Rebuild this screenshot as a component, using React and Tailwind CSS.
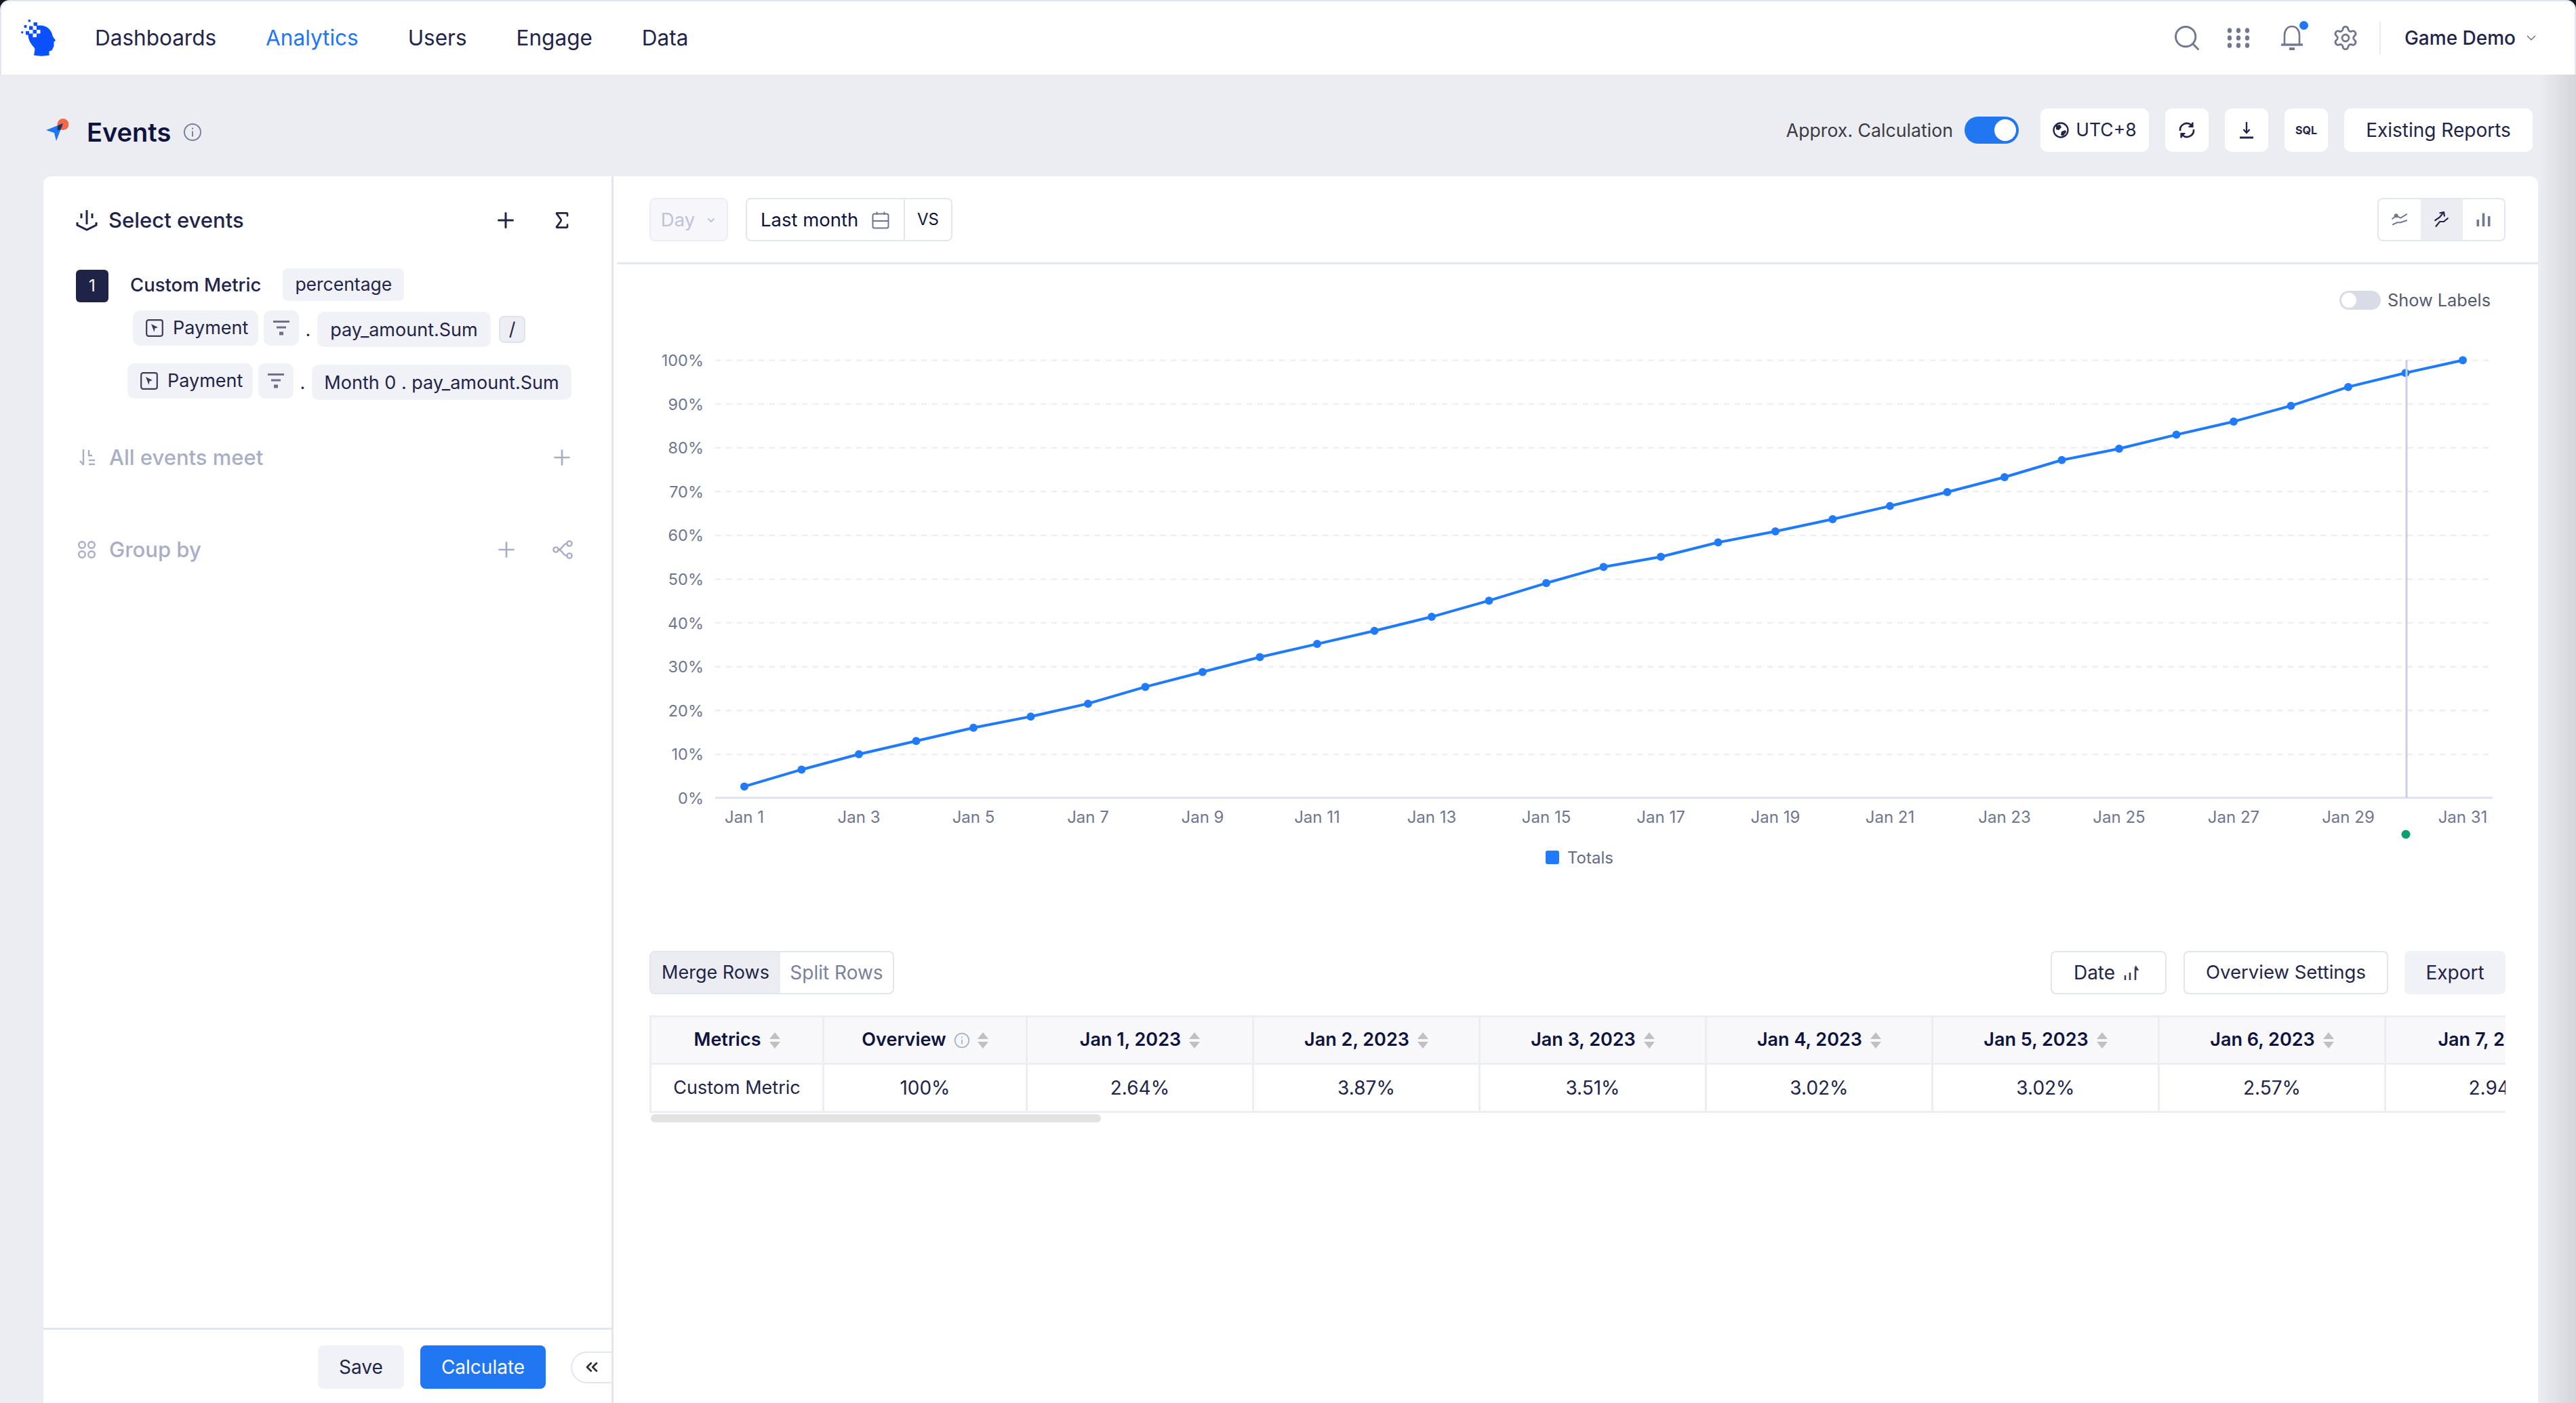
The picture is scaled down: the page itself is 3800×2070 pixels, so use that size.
import { ChevronDown, ChevronsLeft, Plus, Search, Settings, Sigma } from 'lucide-react';

const navLinks = ['Dashboards', 'Analytics', 'Users', 'Engage', 'Data'];

// cumulative share per day, Jan 1 - Jan 31
const series = [
  2.64, 6.51, 10.02, 13.04, 16.06, 18.63, 21.57, 25.4, 28.8, 32.2, 35.2, 38.2, 41.4, 45.1, 49.1, 52.8,
  55.1, 58.4, 60.9, 63.7, 66.7, 69.9, 73.3, 77.2, 79.8, 83, 86, 89.6, 93.9, 97.1, 100,
];

const dayColumns = [
  ['Jan 1, 2023', '2.64%'],
  ['Jan 2, 2023', '3.87%'],
  ['Jan 3, 2023', '3.51%'],
  ['Jan 4, 2023', '3.02%'],
  ['Jan 5, 2023', '3.02%'],
  ['Jan 6, 2023', '2.57%'],
  ['Jan 7, 2023', '2.94%'],
];

const xAt = (i) => 1098 + i * 84.5;
const yAt = (v) => 1177.5 - v * 6.46;

function Logo() {
  return (
    <svg width="60" height="62" viewBox="30 25 60 62" className="shrink-0">
      <path
        d="M50 81.5C50.5 77 52 74 51 71C47 66 42 61 41.5 52C41 44 47 38 58 37.5C69 37 76 44 77.5 52.5C78 55 81.5 58 81.8 59.5C81.5 61 79.5 61 79.3 62.5C79.5 64 80 65 79.3 66.5C79.7 68 79.5 69.5 78 70.5C77.5 73 77 75 73 75.3C72 77 72.5 79.5 73 81.5C65 83 57 83 50 81.5Z"
        fill="#0a50ff"
      />
      <rect x="49.5" y="33" width="5.5" height="5" fill="#0a50ff" />
      <rect x="43" y="38.5" width="5.5" height="5.5" fill="#0a50ff" />
      <rect x="38" y="46" width="5.5" height="5.5" fill="#0a50ff" />
      <rect x="48.5" y="38.5" width="5.5" height="5.5" fill="#fff" />
      <rect x="43" y="44" width="5.5" height="5.5" fill="#fff" />
      <rect x="54" y="44" width="5.5" height="5.5" fill="#fff" />
      <rect x="48.5" y="49.5" width="5.5" height="5.5" fill="#fff" />
      <circle cx="37.5" cy="39" r="2.2" fill="#0a50ff" />
      <circle cx="43.3" cy="30.7" r="1.9" fill="#0a50ff" />
      <circle cx="32.7" cy="47.7" r="1.7" fill="#0a50ff" />
    </svg>
  );
}

function AppsIcon() {
  return (
    <svg width="34" height="32" viewBox="0 0 34 32" fill="#71778f">
      {[5, 16, 27].map((y) =>
        [4, 17, 30].map((x) => <ellipse key={`${x}-${y}`} cx={x} cy={y} rx="3.2" ry="3.8" />)
      )}
    </svg>
  );
}

function BellIcon() {
  return (
    <svg width="34" height="38" viewBox="0 0 34 38" fill="none" stroke="#71778f" strokeWidth="2.6">
      <path d="M6 28V15C6 7.5 10.5 2 17 2C23.5 2 28 7.5 28 15V28" />
      <path d="M1 29H33" strokeWidth="3.4" />
      <path d="M13 35H21" strokeWidth="4" />
    </svg>
  );
}

function RocketIcon() {
  return (
    <svg width="34" height="36" viewBox="67 175 34 36" className="shrink-0">
      <circle cx="93" cy="184.5" r="8.5" fill="#f4694b" />
      <path d="M68 193L93 183L83 209L80 197Z" fill="#1f76f3" />
      <path d="M85 186.2L93 183L89.5 192.5L84.5 193Z" fill="#2b2f4d" />
    </svg>
  );
}

function InfoIcon({ size = 28, color = '#7b819b' }) {
  return (
    <svg width={size} height={size} viewBox="0 0 28 28" fill="none" stroke={color} strokeWidth="2" className="shrink-0">
      <circle cx="14" cy="14" r="12" />
      <path d="M14 12.5V20.5" />
      <path d="M14 7.5V9.8" />
    </svg>
  );
}

function GlobeIcon() {
  return (
    <svg width="24" height="24" viewBox="0 0 24 24" fill="none">
      <circle cx="12" cy="12" r="10.5" stroke="#22244a" strokeWidth="2.4" />
      <path d="M5 5L11 4L13 8L9 12L5 11Z" fill="#22244a" />
      <path d="M13 14L19 12L20 15L15 21L12 19Z" fill="#22244a" />
    </svg>
  );
}

function RefreshIcon() {
  return (
    <svg width="28" height="28" viewBox="0 0 28 28" fill="none" stroke="#22244a" strokeWidth="2.6">
      <path d="M4 15A10 10 0 0 1 20.5 6.5" />
      <path d="M24 13A10 10 0 0 1 7.5 21.5" />
      <path d="M22.5 2.5V9H16.5" strokeWidth="2.2" fill="#22244a" />
      <path d="M5.5 25.5V19H11.5" strokeWidth="2.2" fill="#22244a" />
    </svg>
  );
}

function DownloadIcon() {
  return (
    <svg width="24" height="26" viewBox="0 0 24 26" fill="none" stroke="#22244a" strokeWidth="2.4">
      <path d="M12 1V16" />
      <path d="M7.5 12L12 17L16.5 12" />
      <path d="M2 24H22" strokeWidth="3" />
    </svg>
  );
}

function SelectEventsIcon() {
  return (
    <svg width="32" height="32" viewBox="0 0 32 32" fill="none" stroke="#22244a" strokeWidth="3" className="shrink-0">
      <path d="M16 1V22" />
      <path d="M8 6V13" />
      <path d="M24 6V13" />
      <path d="M2 19V23L16 30L30 23V19" />
    </svg>
  );
}

function WhereIcon() {
  return (
    <svg width="26" height="26" viewBox="0 0 26 26" fill="none" stroke="#a8aec6" strokeWidth="2.4" className="shrink-0">
      <path d="M7 1V24" />
      <path d="M2 18L7 24" />
      <path d="M15 2V10L20 10" />
      <path d="M15 17H24" />
      <path d="M15 23H24" />
    </svg>
  );
}

function GroupIcon() {
  return (
    <svg width="28" height="28" viewBox="0 0 28 28" fill="none" stroke="#a8aec6" strokeWidth="2.4" className="shrink-0">
      <circle cx="7" cy="7" r="4.8" />
      <circle cx="21" cy="7" r="4.8" />
      <circle cx="7" cy="21" r="4.8" />
      <circle cx="21" cy="21" r="4.8" />
    </svg>
  );
}

function ShareIcon() {
  return (
    <svg width="30" height="28" viewBox="0 0 30 28" fill="none" stroke="#a8aec6" strokeWidth="2.4">
      <circle cx="5" cy="14" r="3.6" />
      <circle cx="25" cy="5" r="3.6" />
      <circle cx="25" cy="23" r="3.6" />
      <path d="M8.5 14C15 14 15 5 21.5 5" />
      <path d="M8.5 14C15 14 15 23 21.5 23" />
    </svg>
  );
}

function EventIcon() {
  return (
    <svg width="26" height="26" viewBox="0 0 26 26" fill="none" className="shrink-0">
      <rect x="1.2" y="1.2" width="23.6" height="23.6" rx="3" stroke="#3a3d5c" strokeWidth="2.2" />
      <path d="M8 7L18 12L13.5 13.5L12.5 19Z" fill="#3a3d5c" />
    </svg>
  );
}

function FilterIcon() {
  return (
    <svg width="26" height="26" viewBox="0 0 26 26" fill="none" stroke="#6d7187" className="shrink-0">
      <path d="M1 3.5H25" strokeWidth="3" />
      <path d="M6 12H20" strokeWidth="3" />
      <path d="M10 21H16" strokeWidth="5" />
    </svg>
  );
}

function CalendarIcon() {
  return (
    <svg width="26" height="26" viewBox="0 0 26 26" fill="none" stroke="#6d7390" strokeWidth="2" className="shrink-0">
      <rect x="1.5" y="3.5" width="23" height="21" rx="2.5" />
      <path d="M1.5 14H24.5" />
      <path d="M7.5 0.5V5" />
      <path d="M18.5 0.5V5" />
    </svg>
  );
}

function ChartAreaIcon() {
  return (
    <svg width="24" height="18" viewBox="0 0 24 18" fill="none" stroke="#71778f" strokeWidth="2">
      <path d="M0.5 8.3L6.7 3.3L13.3 6.7L22.8 0.7" />
      <path d="M1 16.7L8.3 13.3H13.3L22.8 10" />
      <circle cx="6.7" cy="3.3" r="3" fill="#71778f" stroke="none" />
    </svg>
  );
}

function ChartLineIcon() {
  return (
    <svg width="22" height="24" viewBox="0 0 22 24" fill="none" stroke="#22244a" strokeWidth="2.2">
      <path d="M0.5 13.5L8 8.5L13 2" />
      <path d="M7.5 2.5L14 1L15 7.5" />
      <path d="M2 22.5L8 15H14L20.5 9.5" />
    </svg>
  );
}

function ChartBarIcon() {
  return (
    <svg width="21" height="20" viewBox="0 0 21 20" fill="#71778f">
      <rect x="0.5" y="10" width="3.6" height="10" />
      <rect x="8.7" y="0.5" width="3.6" height="19.5" />
      <rect x="16.9" y="5" width="3.6" height="15" />
    </svg>
  );
}

function DateSortIcon() {
  return (
    <svg width="24" height="22" viewBox="0 0 24 22" fill="none" stroke="#3a3d5c" strokeWidth="2.6">
      <path d="M3 15V22" />
      <path d="M10 11V22" />
      <path d="M18 3V22" />
      <path d="M18 1L22 7H18" strokeWidth="1.6" fill="#3a3d5c" />
    </svg>
  );
}

function SortIcon() {
  return (
    <svg width="16" height="24" viewBox="0 0 16 24" fill="#c0c0c0" className="shrink-0">
      <path d="M8 0L16 10H0Z" />
      <path d="M8 24L0 14H16Z" />
    </svg>
  );
}

function Chart() {
  const line = series.map((v, i) => `${xAt(i)},${yAt(v)}`).join(' ');
  const ticks = [];
  for (let i = 0; i < 31; i += 2) ticks.push(i);

  return (
    <svg width="2839" height="830" viewBox="905 480 2839 830" className="block shrink-0">
      {[10, 20, 30, 40, 50, 60, 70, 80, 90, 100].map((v) => (
        <line key={v} x1="1055" x2="3673" y1={yAt(v)} y2={yAt(v)} stroke="#edeef5" strokeWidth="2.5" strokeDasharray="8 8" />
      ))}
      <line x1="1055" x2="3677" y1="1177" y2="1177" stroke="#dfe1ee" strokeWidth="3" />
      {[0, 10, 20, 30, 40, 50, 60, 70, 80, 90, 100].map((v) => (
        <text key={v} x="1038" y={yAt(v) + 8.5} textAnchor="end" fontSize="23.5" fill="#6f7690" fontFamily="Inter, sans-serif">
          {v}%
        </text>
      ))}
      {ticks.map((i) => (
        <text key={i} x={xAt(i)} y="1214" textAnchor="middle" fontSize="24" fill="#6f7690" fontFamily="Inter, sans-serif">
          Jan {i + 1}
        </text>
      ))}
      <polyline points={line} fill="none" stroke="#1f7bfc" strokeWidth="4" />
      {series.map((v, i) => (
        <circle key={i} cx={xAt(i)} cy={yAt(v)} r="6" fill="#1f7bfc" />
      ))}
      <line x1="3550" x2="3550" y1="531" y2="1177" stroke="#c8cfe3" strokeWidth="3" />
      <circle cx="3549" cy="1231" r="6.5" fill="#0d9e6e" />
      <rect x="2280" y="1255" width="20" height="20" rx="3" fill="#1f7bfc" />
      <text x="2312" y="1274" fontSize="24" fill="#666c85" fontFamily="Inter, sans-serif">
        Totals
      </text>
    </svg>
  );
}

function EventRow({ className, expr, exprClass, children }) {
  return (
    <div className={`flex items-start text-[27px] text-[#22244a] ${className}`}>
      <div className="flex items-center gap-[14px] h-[52px] w-[185px] pl-[19px] rounded-[10px] bg-[#f1f2f8]">
        <EventIcon />
        <span>Payment</span>
      </div>
      <div className="flex items-center justify-center h-[52px] w-[52px] ml-[8px] rounded-[10px] bg-[#f1f2f8]">
        <FilterIcon />
      </div>
      <span className="w-[27px] text-center leading-[58px]">.</span>
      <div className={`flex items-center justify-center h-[52px] mt-[2px] pt-[2px] rounded-[10px] bg-[#f1f2f8] ${exprClass}`}>{expr}</div>
      {children}
    </div>
  );
}

export default function App() {
  return (
    <div className="relative w-[3800px] h-[2070px] overflow-hidden flex flex-col bg-[#ecedf3] font-['Inter',sans-serif] text-[#22244a]">
      {/* Top nav */}
      <div className="bg-[#14141c] shrink-0">
        <div className="rounded-t-[14px] bg-[#e3e6ee] pt-[2px] px-[2px]">
          <header className="flex items-center h-[108px] pl-[28px] pr-[53px] bg-white rounded-t-[12px]">
            <Logo />
            <nav className="flex items-center gap-[73px] ml-[50px] text-[31.5px]">
              {navLinks.map((label) => (
                <span key={label} className={label === 'Analytics' ? 'text-[#2176f2]' : 'text-[#22244a]'}>
                  {label}
                </span>
              ))}
            </nav>
            <div className="flex items-center ml-auto">
              <Search size={44} strokeWidth={1.6} color="#71778f" />
              <div className="ml-[37px]">
                <AppsIcon />
              </div>
              <div className="relative ml-[45px]">
                <BellIcon />
                <span className="absolute -top-[6px] -right-[7px] w-[13px] h-[13px] rounded-full bg-[#2176f2]"></span>
              </div>
              <Settings size={40} strokeWidth={1.7} color="#71778f" className="ml-[42px]" />
              <div className="w-[2px] h-[48px] ml-[30px] bg-[#e8e9f0]"></div>
              <span className="ml-[35px] text-[28px] font-medium">Game Demo</span>
              <ChevronDown size={22} strokeWidth={1.8} color="#71778f" className="ml-[12px]" />
            </div>
          </header>
        </div>
      </div>

      {/* Page header */}
      <div className="flex items-center shrink-0 h-[150px] pt-[14px] pl-[67px] pr-[64px]">
        <RocketIcon />
        <h1 className="ml-[27px] mt-[5px] text-[38px] leading-none font-semibold text-[#0f1340]">Events</h1>
        <div className="ml-[18px] mt-[5px]">
          <InfoIcon />
        </div>
        <div className="flex items-center ml-auto">
          <span className="text-[26.7px] text-[#3a3a3f]">Approx. Calculation</span>
          <div className="flex items-center justify-end w-[80px] h-[40px] ml-[17px] pr-[4px] rounded-full bg-[#2176f2]">
            <span className="w-[32px] h-[32px] rounded-full bg-white"></span>
          </div>
          <div className="flex items-center gap-[24px] ml-[32px] text-[28px]">
            <button className="flex items-center justify-center gap-[10px] w-[160px] h-[64px] rounded-[10px] bg-white text-[26.5px]">
              <GlobeIcon />
              <span>UTC+8</span>
            </button>
            <button className="flex items-center justify-center w-[64px] h-[64px] rounded-[10px] bg-white">
              <RefreshIcon />
            </button>
            <button className="flex items-center justify-center w-[64px] h-[64px] rounded-[10px] bg-white">
              <DownloadIcon />
            </button>
            <button className="flex items-center justify-center w-[64px] h-[64px] rounded-[10px] bg-white text-[16px] font-bold">
              SQL
            </button>
            <button className="flex items-center justify-center w-[278px] h-[64px] rounded-[10px] bg-white">
              Existing Reports
            </button>
          </div>
        </div>
      </div>

      {/* Main card */}
      <main className="flex flex-1 min-h-0 ml-[64px] mr-[56px] rounded-t-[12px] bg-white">
        {/* Query panel */}
        <aside className="flex flex-col shrink-0 w-[841px] border-r-[3px] border-[#e4e6ef]">
          <div className="flex items-center h-[130px] pl-[48px] pr-[57px]">
            <SelectEventsIcon />
            <span className="ml-[16px] text-[31px] font-medium">Select events</span>
            <Plus size={36} strokeWidth={2} color="#22244a" className="ml-auto" />
            <Sigma size={32} strokeWidth={2} color="#22244a" className="ml-[49px]" />
          </div>

          <div className="flex items-start h-[62px] mt-[6px] pl-[48px]">
            <span className="flex items-center justify-center w-[48px] h-[48px] mt-[2px] rounded-[6px] bg-[#1f2347] text-[24px] text-white">
              1
            </span>
            <span className="ml-[32px] text-[27.5px] leading-[48px] font-medium">Custom Metric</span>
            <span className="flex items-center h-[48px] ml-[32px] px-[18px] rounded-[8px] bg-[#f1f2f8] text-[26.5px]">percentage</span>
          </div>

          <EventRow className="h-[78px] ml-[132px]" exprClass="w-[256px]" expr="pay_amount.Sum">
            <div className="flex items-center justify-center w-[39px] h-[40px] ml-[12px] mt-[8px] rounded-[8px] border-2 border-[#e0e2ec] bg-[#eceef4]">
              /
            </div>
          </EventRow>
          <EventRow className="h-[52px] ml-[124px]" exprClass="w-[383px]" expr="Month 0 . pay_amount.Sum" />

          <div className="flex items-center h-[40px] mt-[67px] pl-[52px] pr-[55px] text-[31px] font-medium text-[#a8aec6]">
            <WhereIcon />
            <span className="ml-[19px]">All events meet</span>
            <Plus size={36} strokeWidth={1.8} color="#a8aec6" className="ml-auto" />
          </div>

          <div className="flex items-center h-[40px] mt-[96px] pl-[50px] pr-[57px] text-[31px] font-medium text-[#a8aec6]">
            <GroupIcon />
            <span className="ml-[19px]">Group by</span>
            <Plus size={36} strokeWidth={1.8} color="#a8aec6" className="ml-auto" />
            <div className="ml-[50px]">
              <ShareIcon />
            </div>
          </div>

          <div className="flex items-center justify-end mt-auto h-[111px] pt-[2px] border-t-[3px] border-[#e4e6ef] text-[28px]">
            <button className="w-[127px] h-[64px] rounded-[8px] bg-[#f1f2f8]">Save</button>
            <button className="w-[185px] h-[64px] ml-[24px] rounded-[8px] bg-[#2176f2] text-white">Calculate</button>
            <div className="flex items-center justify-center w-[60px] h-[47px] ml-[37px] rounded-l-full border-2 border-r-0 border-[#e4e6ef]">
              <ChevronsLeft size={28} strokeWidth={2.4} color="#333" />
            </div>
          </div>
        </aside>

        {/* Results */}
        <section className="flex flex-col flex-1 min-w-0">
          <div className="flex items-center shrink-0 h-[130px] ml-[5px] pl-[48px] pr-[48px] border-b-[3px] border-[#e6e8ef] text-[27.5px]">
            <div className="flex items-center justify-center gap-[16px] w-[116px] h-[64px] pt-[3px] rounded-[8px] border-2 border-[#eceef4] bg-[#f7f7fb] text-[#bfc3d6]">
              <span>Day</span>
              <ChevronDown size={16} strokeWidth={3} />
            </div>
            <div className="flex items-center h-[64px] ml-[26px] rounded-[8px] border-2 border-[#e4e6ef]">
              <div className="flex items-center w-[233px] h-full pl-[20px] pt-[3px] border-r-2 border-[#e4e6ef] text-[#0f1340]">
                <span>Last month</span>
                <div className="ml-auto mr-[21px]">
                  <CalendarIcon />
                </div>
              </div>
              <span className="flex items-center justify-center w-[68px] text-[24px] text-[#0f1340]">VS</span>
            </div>
            <div className="flex items-stretch h-[64px] ml-auto rounded-[8px] border-2 border-[#e4e6ef]">
              <span className="flex items-center justify-center w-[62px]">
                <ChartAreaIcon />
              </span>
              <span className="flex items-center justify-center w-[62px] bg-[#ecedf3]">
                <ChartLineIcon />
              </span>
              <span className="flex items-center justify-center w-[61px]">
                <ChartBarIcon />
              </span>
            </div>
          </div>

          <div className="flex items-center justify-end shrink-0 h-[28px] mt-[39px] pr-[70px] text-[25.3px] text-[#555a70]">
            <div className="flex items-center w-[61px] h-[28px] pl-[3px] rounded-full bg-[#d9dbe6]">
              <span className="w-[22px] h-[22px] rounded-full bg-white"></span>
            </div>
            <span className="ml-[10px]">Show Labels</span>
          </div>

          <div className="mt-[23px]">
            <Chart />
          </div>

          <div className="flex items-center shrink-0 mt-[93px] px-[53px] pr-[48px] text-[28px]">
            <div className="flex h-[64px] rounded-[8px] border-2 border-[#e4e6ef] overflow-hidden">
              <span className="flex items-center justify-center w-[191px] bg-[#ecedf3] text-[27px]">Merge Rows</span>
              <span className="flex items-center justify-center w-[166px] text-[#7b819b]">Split Rows</span>
            </div>
            <button className="flex items-center justify-center gap-[12px] w-[171px] h-[64px] pr-[6px] ml-auto rounded-[8px] border-2 border-[#e4e6ef]">
              <span>Date</span>
              <DateSortIcon />
            </button>
            <button className="w-[302px] h-[64px] ml-[25px] rounded-[8px] border-2 border-[#e4e6ef] text-[27.5px]">Overview Settings</button>
            <button className="w-[149px] h-[64px] ml-[24px] rounded-[8px] bg-[#f1f2f8]">Export</button>
          </div>

          <div className="w-[2738px] ml-[53px] mt-[31px] overflow-hidden shrink-0">
            <table className="table-fixed border-collapse w-[2893px] text-[28px]">
              <thead>
                <tr className="h-[70px] bg-[#f8f8fb] text-[27px] text-[#0f1340]">
                  <th className="w-[255px] border-[3px] border-[#eceef4] font-semibold">
                    <div className="flex items-center justify-center gap-[12px]">
                      <span>Metrics</span>
                      <SortIcon />
                    </div>
                  </th>
                  <th className="w-[300px] border-[3px] border-[#eceef4] font-semibold">
                    <div className="flex items-center justify-center gap-[11px]">
                      <span>Overview</span>
                      <InfoIcon size={24} color="#a8aec6" />
                      <SortIcon />
                    </div>
                  </th>
                  {dayColumns.map(([day]) => (
                    <th key={day} className="w-[334px] border-[3px] border-[#eceef4] font-semibold">
                      <div className="flex items-center justify-center gap-[12px]">
                        <span>{day}</span>
                        <SortIcon />
                      </div>
                    </th>
                  ))}
                </tr>
              </thead>
              <tbody>
                <tr className="h-[71px] text-center">
                  <td className="border-[3px] border-[#eceef4] text-[27px]">Custom Metric</td>
                  <td className="border-[3px] border-[#eceef4]">100%</td>
                  {dayColumns.map(([day, value]) => (
                    <td key={day} className="border-[3px] border-[#eceef4]">
                      {value}
                    </td>
                  ))}
                </tr>
              </tbody>
            </table>
          </div>
          <div className="w-[664px] h-[12px] ml-[55px] mt-[2px] rounded-full bg-[#e3e3e3] shrink-0"></div>
        </section>
      </main>

      {/* soft shade down the right edge */}
      <div className="absolute right-0 top-[110px] bottom-0 w-[56px] pointer-events-none bg-gradient-to-r from-transparent to-black/10"></div>
    </div>
  );
}
